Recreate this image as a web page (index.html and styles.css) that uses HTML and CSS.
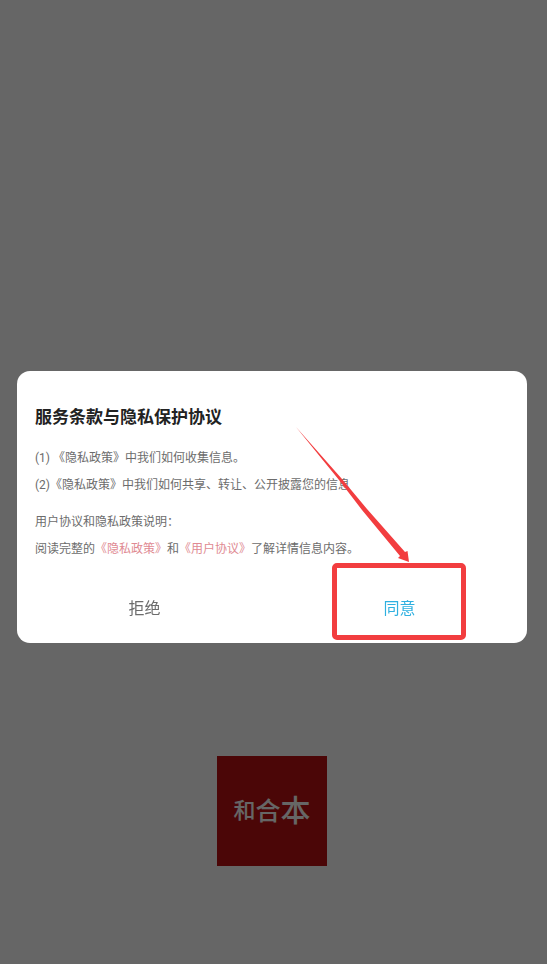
FILE: index.html
```html
<!DOCTYPE html>
<html lang="zh-CN">
<head>
  <meta charset="UTF-8">
  <meta name="viewport" content="width=device-width, initial-scale=1">
  <title>和合本</title>
  <link rel="stylesheet" href="styles.css">
</head>
<body>

  <main class="splash">
    <h1 class="logo"><span class="small">和</span><span class="medium">合</span><span class="large">本</span></h1>
  </main>

  <div class="overlay">
    <section class="dialog" role="dialog" aria-modal="true" aria-labelledby="dialog-title">
      <div class="content">
        <h2 id="dialog-title">服务条款与隐私保护协议</h2>
        <p>(1) 《隐私政策》中我们如何收集信息。<br>(2)《隐私政策》中我们如何共享、转让、公开披露您的信息</p>
        <p>用户协议和隐私政策说明：<br>阅读完整的<a href="#privacy">《隐私政策》</a>和<a href="#terms">《用户协议》</a>了解详情信息内容。</p>
      </div>

      <div class="actions">
        <button type="button">拒绝</button>
        <button type="button" class="agree">同意<span class="highlight"></span></button>
      </div>

      <svg class="arrow" viewBox="0 0 114 136" aria-hidden="true">
        <path d="M0 0 L46 52 L71 82 L109 125 L111.500 124 L113 135 L102 131 L104 129 L66 83 L43 53 Z"/>
      </svg>
    </section>
  </div>

</body>
</html>
```

FILE: styles.css
```css
* {
  box-sizing: border-box;
}

body {
  margin: 0;
  background: white;
  font-family: Roboto, "Noto Sans CJK SC", sans-serif;
  font-size: 12px;
  color: #6c6c6c;
}

/* Launch screen */
.splash {
  min-height: 100vh;
  padding: 0 20px 98px 17px;
  display: flex;
  justify-content: center;
  align-items: flex-end;
}

.logo {
  width: 110px;
  height: 110px;
  margin: 0;
  display: flex;
  justify-content: center;
  align-items: center;
  background: #bb0f12;
  color: white;
  font-weight: 500;
  line-height: 1;
}

.logo .small {
  font-size: 22px;
}

.logo .medium {
  font-size: 25px;
}

.logo .large {
  font-size: 30px;
}

/* Dimmed layer with the agreement dialog */
.overlay {
  position: fixed;
  inset: 0;
  padding: 50px 20px 0 17px;
  display: flex;
  align-items: center;
  background: rgba(0, 0, 0, 0.6);
}

.dialog {
  position: relative;
  flex: 1;
  border-radius: 13px;
  background: white;
}

.content {
  padding: 33px 18px 0;
}

.content h2 {
  margin: 0 0 15px;
  font-size: 17px;
  line-height: 26px;
  color: #222;
}

.content p {
  margin: 0 0 10px;
  line-height: 27px;
}

.content a {
  color: #e08a92;
  text-decoration: none;
}

.actions {
  display: flex;
  padding-bottom: 3px;
}

.actions button {
  position: relative;
  flex: 1;
  height: 67px;
  padding: 0;
  border: none;
  background: none;
  font-family: inherit;
  font-size: 16px;
  color: #6c6c6c;
  cursor: pointer;
}

.actions .agree {
  color: #2fb0e0;
}

/* Marker frame and arrow over the agree button */
.highlight {
  position: absolute;
  top: -10px;
  bottom: 0;
  left: 50%;
  width: 134px;
  margin-left: -68px;
  border: 5px solid #f23d3f;
  border-radius: 5px;
}

.arrow {
  position: absolute;
  right: 117px;
  bottom: 80px;
  width: 114px;
  height: 136px;
  fill: #f23d3f;
}
```
